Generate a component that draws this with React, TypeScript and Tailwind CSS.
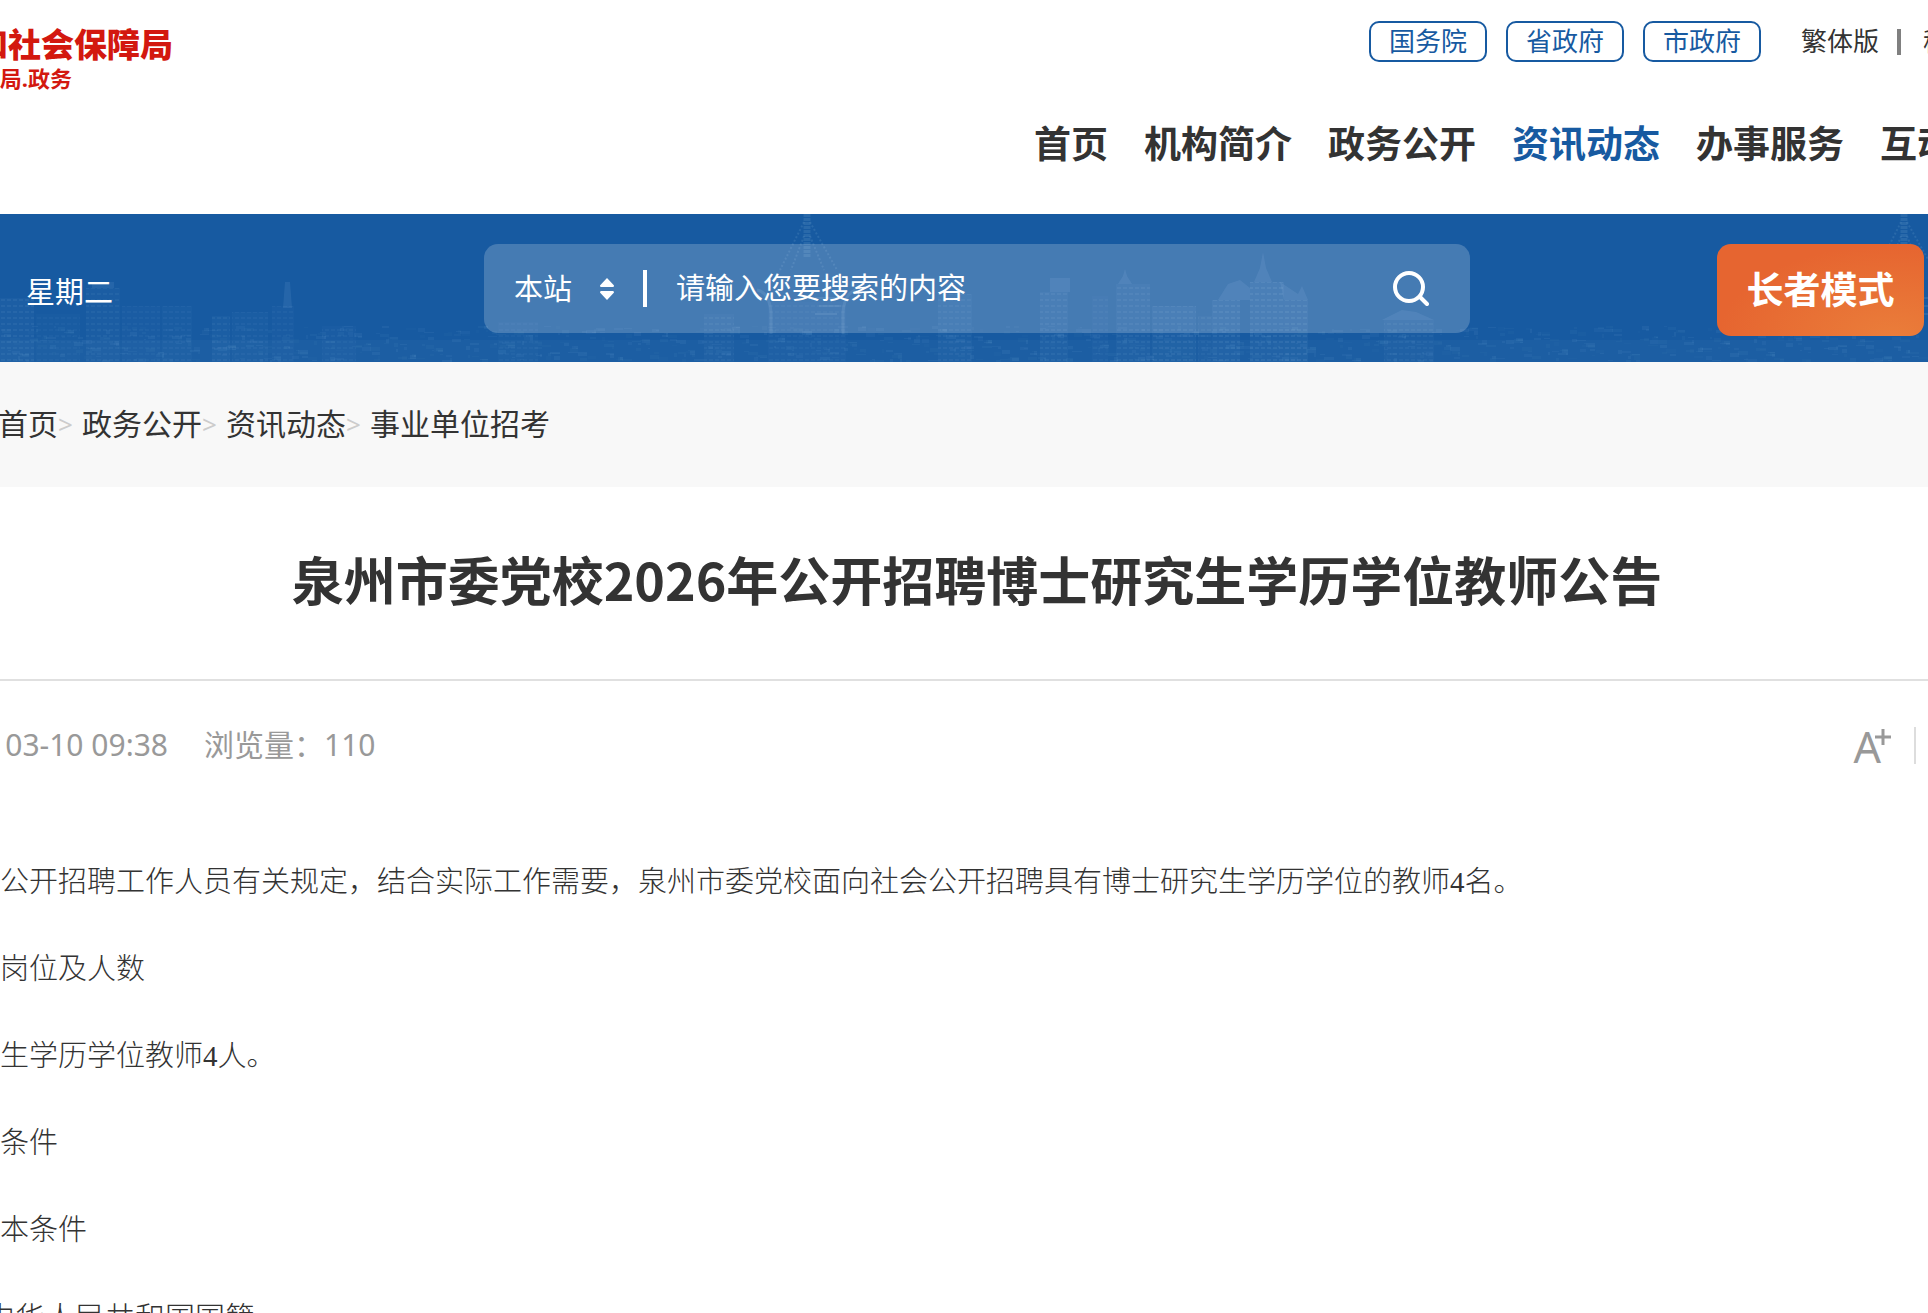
import { ReactNode } from 'react'

const GOV_LINKS = ['国务院', '省政府', '市政府']

const NAV_ITEMS = [
  { label: '首页' },
  { label: '机构简介' },
  { label: '政务公开' },
  { label: '资讯动态', active: true },
  { label: '办事服务' },
  { label: '互动交流' },
]

const CRUMBS = ['政务公开', '资讯动态', '事业单位招考']

const PARAGRAPHS = [
  '公开招聘工作人员有关规定，结合实际工作需要，泉州市委党校面向社会公开招聘具有博士研究生学历学位的教师4名。',
  '岗位及人数',
  '生学历学位教师4人。',
  '条件',
  '本条件',
]

// x, top, width, opacity
const BUILDINGS = [
  [0, 84, 34, 0.1],
  [36, 100, 44, 0.05],
  [86, 74, 34, 0.08],
  [122, 92, 38, 0.06],
  [162, 92, 30, 0.07],
  [212, 102, 18, 0.09],
  [232, 98, 36, 0.07],
  [272, 92, 22, 0.06],
  [322, 112, 34, 0.06],
  [498, 108, 40, 0.05],
  [704, 100, 30, 0.08],
  [768, 88, 78, 0.06],
  [938, 80, 34, 0.09],
  [1040, 78, 28, 0.1],
  [1092, 82, 16, 0.06],
  [1116, 70, 34, 0.1],
  [1152, 92, 44, 0.12],
  [1198, 102, 14, 0.08],
  [1212, 86, 28, 0.13],
  [1250, 68, 34, 0.13],
  [1284, 86, 24, 0.14],
  [1384, 106, 50, 0.08],
]

// low houses along the waterfront
const HOUSES = Array.from({ length: 960 }, (_, i) => ({
  x: i * 2,
  y: 112 + ((i * 37 + ((i * i) % 23)) % 35),
  w: 2 + ((i * 7) % 9),
  h: 1 + ((i * 11) % 4),
  o: 0.02 + ((i * 17) % 7) / 100,
}))

function Tower({ x }: { x: number }) {
  return (
    <g stroke="#a9d2f2" fill="none" strokeOpacity="0.12">
      <path d={`M${x} 0v44`} strokeWidth="7" strokeDasharray="3 1" />
      <path d={`M${x - 3} 8L${x - 27} 56M${x + 3} 8L${x + 30} 56`} strokeWidth="2" strokeDasharray="2 2" />
      <path d={`M${x - 3} 22L${x - 16} 56M${x + 3} 22L${x + 17} 56`} strokeWidth="2" strokeDasharray="2 2" />
      <path d={`M${x - 50} 76q12 2 14 22v22M${x + 50} 76q-12 2 -14 22v22`} strokeWidth="3" />
      <path d={`M${x + 8} 84h26M${x + 12} 92h22M${x + 8} 100h22`} strokeWidth="2" />
    </g>
  )
}

function Skyline() {
  return (
    <svg
      className="absolute inset-0 h-full w-full"
      viewBox="0 0 1928 148"
      preserveAspectRatio="xMidYMax slice"
      aria-hidden="true"
    >
      <defs>
        <pattern id="windows" width="6" height="6" patternUnits="userSpaceOnUse">
          <rect width="6" height="6" fill="#8fc0ea" fillOpacity="0.4" />
          <rect x="1" y="1" width="4" height="2" fill="#a9d2f2" />
        </pattern>
      </defs>
      <rect y="126" width="1928" height="22" fill="#8fc0ea" fillOpacity="0.04" />
      {BUILDINGS.map(([x, y, w, o]) => (
        <rect key={x} x={x} y={y} width={w} height={148 - y} fill="url(#windows)" opacity={o} />
      ))}
      {HOUSES.map((h) => (
        <rect key={h.x} x={h.x} y={h.y} width={h.w} height={h.h} fill="#8fc0ea" fillOpacity={h.o} />
      ))}
      <g fill="#a9d2f2" fillOpacity="0.1">
        <path d="M283 94l2 -26h5l2 26z" />
        <path d="M92 74h22v-6h-22z" />
        <path d="M1050 78v-14h20v14z" />
        <path d="M1118 70l5 -8 2 -7 2 7 5 8z" />
        <path d="M1254 68l6 -14 3 -16 3 16 6 14z" />
        <path d="M1218 86l10 -16 12 -4 10 8v12z" />
        <path d="M1280 68l18 12 4 -8 6 14h-24z" />
        <path d="M1382 106l20 -10 14 2 18 8z" />
      </g>
      <Tower x={807} />
      <Tower x={1904} />
    </svg>
  )
}

// keeps the end of the text in view, the start runs off the left edge
function TailClip({ className, children }: { className: string; children: ReactNode }) {
  return <div className={`flex justify-end overflow-hidden whitespace-nowrap ${className}`}>{children}</div>
}

function Header() {
  return (
    <header className="flex h-[214px] justify-between overflow-hidden bg-white">
      <div className="pt-6 font-bold text-[#d3180f]">
        <TailClip className="w-[173px] text-[33px] leading-[42px] font-black">和社会保障局</TailClip>
        <TailClip className="w-[72px] text-[22px] leading-6">局.政务</TailClip>
      </div>

      <div className="w-[894px] overflow-hidden whitespace-nowrap">
        <div className="ml-auto flex w-[559px] items-center pt-[21px] text-[26px]">
          <div className="flex shrink-0 gap-[19px]">
            {GOV_LINKS.map((label) => (
              <a
                key={label}
                href="#"
                className="flex h-[41px] w-[118px] items-center justify-center rounded-[10px] border-2 border-[#175aa1] text-[#175aa1]"
              >
                {label}
              </a>
            ))}
          </div>
          <a href="#" className="ml-10 shrink-0">繁体版</a>
          <span className="mr-[22px] ml-[18px] h-[26px] w-1 shrink-0 bg-[#808080]" />
          <a href="#" className="shrink-0">移动版</a>
        </div>

        <nav className="mt-[52px] flex gap-9 text-[37px] leading-[60px] font-bold">
          {NAV_ITEMS.map((item) => (
            <a key={item.label} href="#" className={item.active ? 'shrink-0 text-[#175aa1]' : 'shrink-0'}>
              {item.label}
            </a>
          ))}
        </nav>
      </div>
    </header>
  )
}

function SearchBand() {
  return (
    <section className="relative h-[148px] bg-[#175aa1] text-white">
      <Skyline />
      <div className="relative grid grid-cols-[1fr_986px_1fr] items-start pt-[30px] pl-[26px] text-[29px]">
        <p className="pt-[26px] leading-[44px]">星期二</p>

        <form className="flex h-[89px] items-center rounded-[14px] bg-white/20 pr-[41px] pl-[30px]">
          <label className="relative flex w-[100px] items-center">
            <select aria-label="搜索范围" className="w-full appearance-none bg-transparent leading-[44px] outline-none">
              <option>本站</option>
            </select>
            <svg className="pointer-events-none absolute right-0 h-[22px] w-[14px]" viewBox="0 0 14 22" fill="currentColor">
              <path d="M7 0L14 7.500Q14 9 13 9H1Q0 9 0 7.500Z" />
              <path d="M7 22L14 14.500Q14 13 13 13H1Q0 13 0 14.500Z" />
            </svg>
          </label>
          <span className="ml-[29px] h-[37px] w-1 bg-white" />
          <input
            type="text"
            aria-label="搜索"
            placeholder="请输入您要搜索的内容"
            className="ml-[29px] min-w-0 flex-1 bg-transparent pb-0.5 leading-[44px] outline-none placeholder:text-white placeholder:opacity-100"
          />
          <button type="button" aria-label="搜索" className="h-9 w-9">
            <svg viewBox="0 0 36 36" fill="none" stroke="currentColor" strokeWidth="4" strokeLinecap="round">
              <circle cx="16" cy="16" r="14" />
              <path d="M27 26l7 7" />
            </svg>
          </button>
        </form>

        <button
          type="button"
          className="mr-1 h-[92px] w-[207px] justify-self-end rounded-[14px] bg-[#e66530] bg-[radial-gradient(ellipse_at_85%_100%,#ea7d3a_0%,#e66530_70%)] text-[37px] font-bold"
        >
          长者模式
        </button>
      </div>
    </section>
  )
}

function Breadcrumb() {
  return (
    <nav className="flex h-[125px] bg-[#f8f8f8] pt-10 text-[30px] leading-[44px]">
      <TailClip className="w-[58px]">
        <a href="#">首页</a>
      </TailClip>
      {CRUMBS.map((label) => (
        <span key={label} className="flex">
          <span className="w-6 text-[26px] text-[#ccc]">&gt;</span>
          <a href="#">{label}</a>
        </span>
      ))}
    </nav>
  )
}

function Article() {
  return (
    <article>
      <h1 className="border-b-2 border-[#e0e0e0] pt-[58px] pb-[66px] pl-[26px] text-center text-[52px] leading-[68px] font-bold [font-family:'Noto_Sans_CJK_SC',sans-serif]">
        泉州市委党校2026年公开招聘博士研究生学历学位教师公告
      </h1>

      <div className="flex items-center justify-between pt-10 text-[30px] leading-[44px] text-[#999]">
        <div className="flex">
          <TailClip className="w-[168px]">03-10 09:38</TailClip>
          <span className="ml-9">浏览量：110</span>
        </div>
        <div className="flex items-center">
          <button type="button" aria-label="放大字体" className="flex pt-1 text-[43px]">
            A
            <svg className="-ml-1.5 mt-1 h-4 w-4" viewBox="0 0 16 16" stroke="currentColor" strokeWidth="3">
              <path d="M8 0v16M0 8h16" />
            </svg>
          </button>
          <span className="mr-3 ml-[23px] h-[37px] w-0.5 bg-[#ddd]" />
        </div>
      </div>

      <div className="pt-[70px] text-[29px] leading-[87px] font-light whitespace-nowrap [font-family:'Liberation_Serif','Noto_Sans_CJK_SC',serif]">
        {PARAGRAPHS.map((text) => (
          <p key={text}>{text}</p>
        ))}
        <TailClip className="w-[255px] text-[30px]">中华人民共和国国籍</TailClip>
      </div>
    </article>
  )
}

export default function App() {
  return (
    <div className="h-screen overflow-hidden bg-white text-[#333] [font-family:'Noto_Sans','Noto_Sans_CJK_SC',sans-serif]">
      <Header />
      <SearchBand />
      <Breadcrumb />
      <Article />
    </div>
  )
}
